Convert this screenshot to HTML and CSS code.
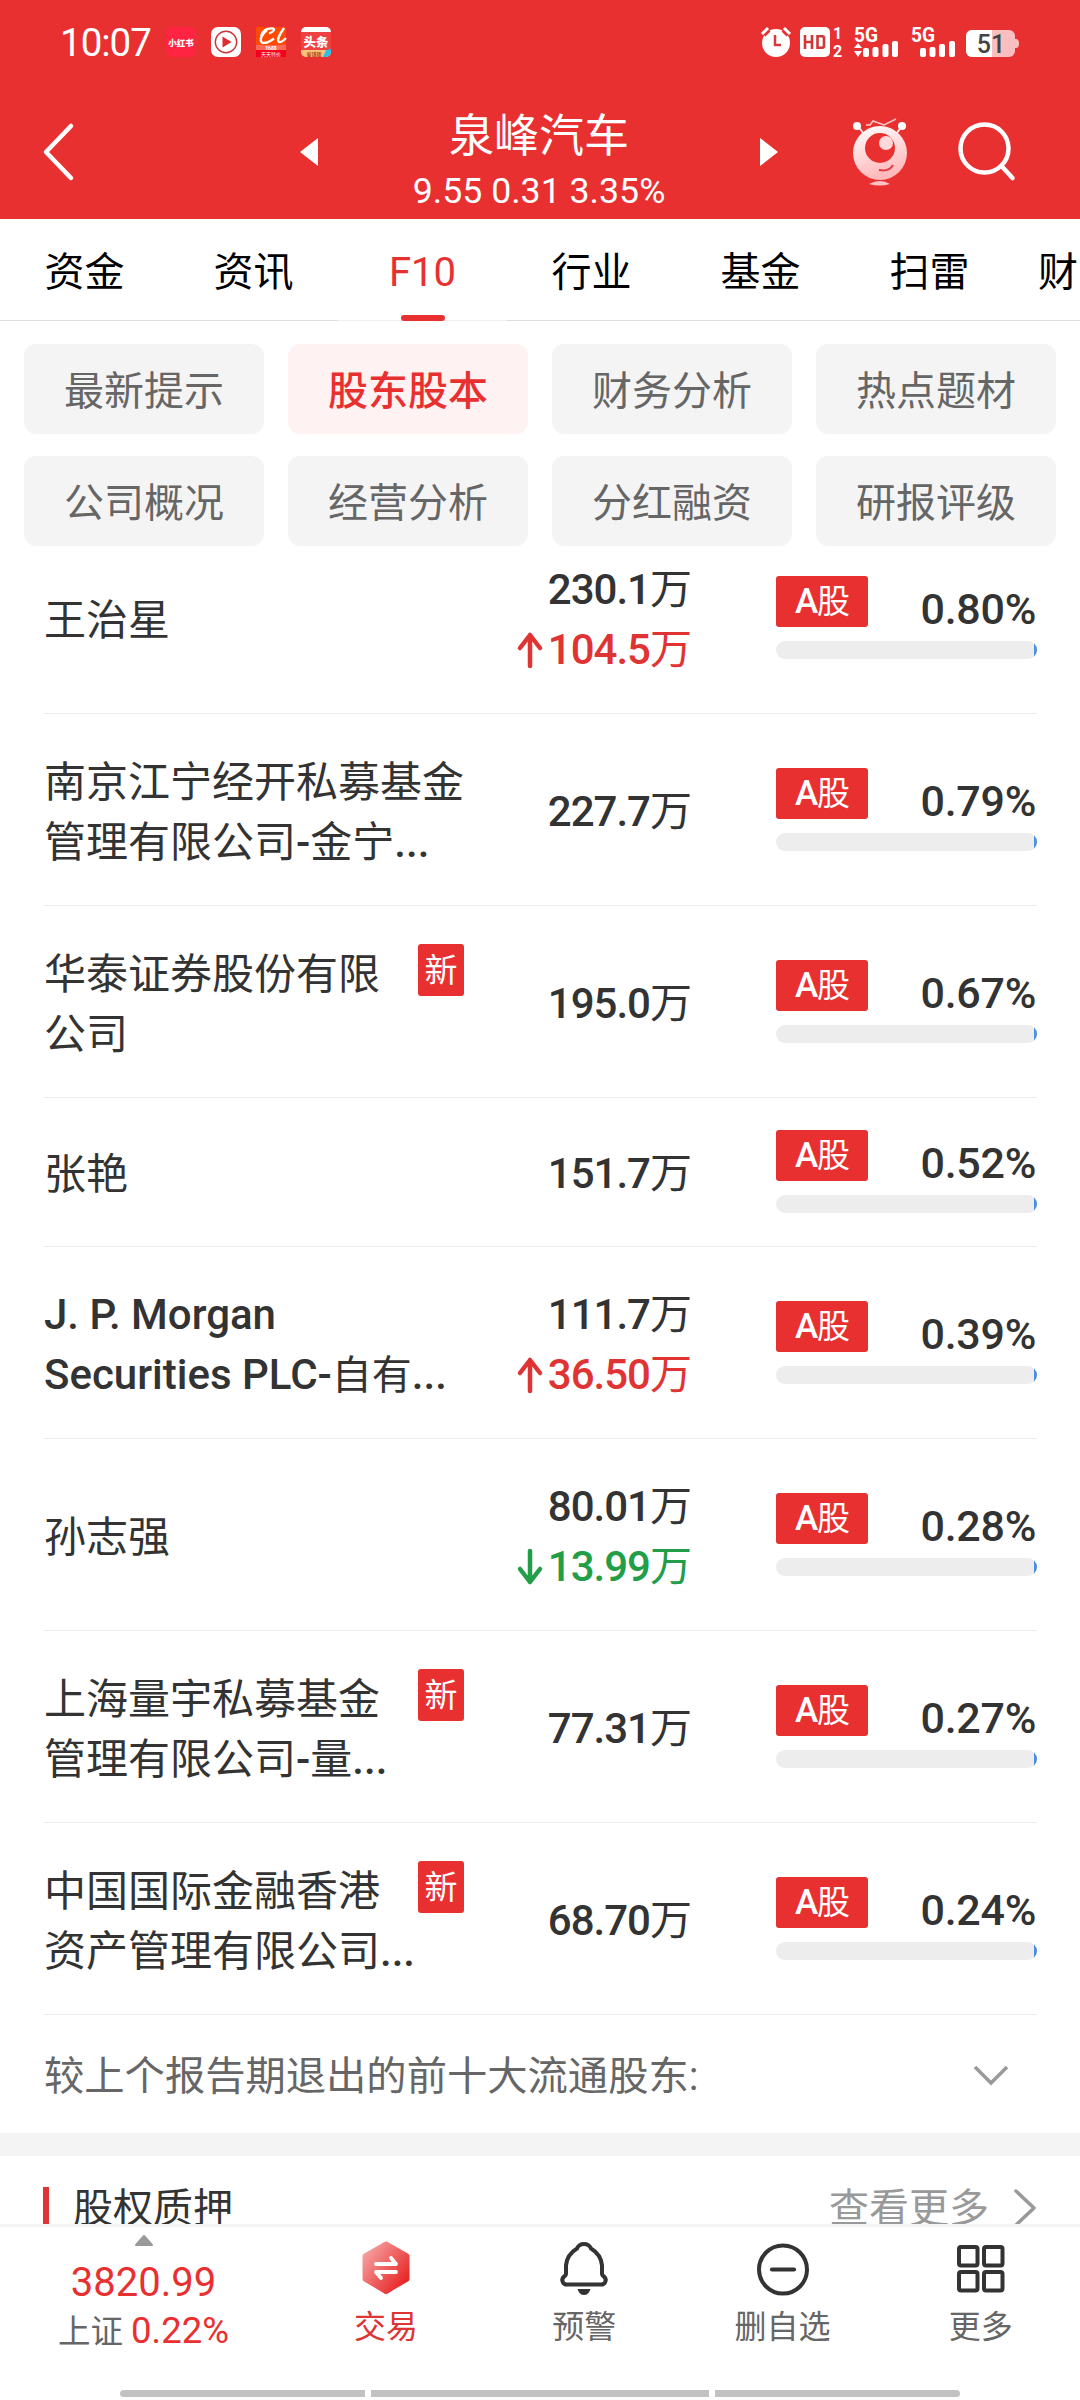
FILE: index.html
```
<!DOCTYPE html>
<html lang="zh-CN">
<head>
	<meta charset="UTF-8">
	<title>泉峰汽车</title>
	<link rel="stylesheet" href="styles.css">
</head>
<body>
<div class="page">
	<!--顶部-->
	<div class="top">
		<div class="status">
			<span class="time">10:07</span>
			<div class="apps">
				<svg width="30" height="30" viewBox="0 0 30 30"><rect width="30" height="30" rx="7" fill="#ff2442"/><text x="15" y="18.5" font-size="8.5" font-weight="900" fill="#fff" text-anchor="middle">小红书</text></svg>
				<svg width="30" height="30" viewBox="0 0 30 30"><rect width="30" height="30" rx="7" fill="#fff"/><circle cx="15" cy="15" r="10.7" fill="none" stroke="#c8373a" stroke-width="1.4"/><path d="M11.5 9.5v11l9-5.500z" fill="#e02b30"/></svg>
				<svg width="30" height="30" viewBox="0 0 30 30"><rect width="30" height="30" fill="#ff4a00"/><path d="M5 9C7 3 12 1 17 1.500c3 1-1 4-4 5M11 3C6 7 3 13 6 15.500c4 2 9-2 12-4M28 1c-4 6-8 12-5 14 2 1 5-2 7-4" fill="none" stroke="#fff" stroke-width="2.300"/><rect y="18" width="30" height="6" fill="#ff6a58"/><rect y="23" width="30" height="7" fill="#f5001d"/><text x="15" y="22.500" font-size="5" font-weight="700" fill="#fff" text-anchor="middle">1688</text><text x="15" y="28.500" font-size="5" fill="#fff" text-anchor="middle">天天特价</text></svg>
				<svg width="30" height="30" viewBox="0 0 30 30"><rect width="30" height="30" rx="5" fill="#f04142"/><path d="M0 5a5 5 0 0 1 5-5h20a5 5 0 0 1 5 5z" fill="#fff"/><text x="15" y="19.500" font-size="12.500" font-weight="900" fill="#fff" text-anchor="middle">头条</text><path d="M0 23h30v2a5 5 0 0 1-5 5H5a5 5 0 0 1-5-5z" fill="#f6c47c"/><text x="13" y="28.500" font-size="5" font-weight="700" fill="#b54a20" text-anchor="middle">省钱版</text><path d="M22 30l3-7 5-1v3a5 5 0 0 1-5 5z" fill="#2dbfe6"/></svg>
			</div>
			<svg class="signs" width="258" height="32" viewBox="0 0 258 32">
				<!--闹钟-->
				<circle cx="14" cy="17" r="14" fill="#fff"/>
				<path d="M1 8l5-5M27 8l-5-5" stroke="#e93030" stroke-width="7"/>
				<path d="M0 8l6-6M28 8l-6-6" stroke="#fff" stroke-width="3"/>
				<path d="M13 9v10h6" fill="none" stroke="#d9393a" stroke-width="2.500"/>
				<!--HD-->
				<rect x="38" y="1" width="30" height="30" rx="5" fill="#fff"/>
				<path d="M43 9v14M50 9v14M43 16h7M55.500 10.200h4.500q2 0 2 2v7.600q0 2-2 2h-4.500z" fill="none" stroke="#cf3638" stroke-width="2.600"/>
				<text x="75.500" y="13" font-size="16" font-weight="700" text-anchor="middle">1</text>
				<text x="75.500" y="31" font-size="16" font-weight="700" text-anchor="middle">2</text>
				<!--信号-->
				<text x="92" y="16" font-size="20" font-weight="700" textLength="24" lengthAdjust="spacingAndGlyphs">5G</text>
				<path d="M92 22l4-5 4 5zM92 25h8l-4 6z" fill="#fff"/>
				<g fill="#fff"><rect x="101" y="22" width="6" height="9" rx="2"/><rect x="110.500" y="21" width="6" height="10" rx="2"/><rect x="120.500" y="18" width="6" height="13" rx="2"/><rect x="130" y="15" width="6" height="16" rx="2"/></g>
				<text x="149" y="16" font-size="20" font-weight="700" textLength="24" lengthAdjust="spacingAndGlyphs">5G</text>
				<g fill="#fff"><rect x="158" y="22" width="6" height="9" rx="2"/><rect x="167.500" y="21" width="6" height="10" rx="2"/><rect x="177" y="18" width="6" height="13" rx="2"/><rect x="187" y="15" width="6" height="16" rx="2"/></g>
				<!--电量-->
				<path d="M210 4h37a6 6 0 0 1 6 6v3h1q3 0 3 4.500T254 22h-1v3a6 6 0 0 1-6 6h-37a6 6 0 0 1-6-6V10a6 6 0 0 1 6-6z" fill="#f9bfc0"/>
				<path d="M210 4h20v27h-20a6 6 0 0 1-6-6V10a6 6 0 0 1 6-6z" fill="#fff"/>
				<text class="power" x="229" y="26.500" font-size="25" font-weight="500" text-anchor="middle">51</text>
			</svg>
		</div>
		<div class="title-bar">
			<svg class="back" width="32" height="60" viewBox="0 0 32 60"><path d="M28 4L3 30l25 26" fill="none" stroke="#fff" stroke-width="4.500" stroke-linecap="round" stroke-linejoin="round"/></svg>
			<svg class="prev" width="18" height="28" viewBox="0 0 18 28"><path d="M18 0v28L0 14z" fill="#fff"/></svg>
			<div class="stock">
				<h1>泉峰汽车</h1>
				<p>9.55 0.31 3.35%</p>
			</div>
			<svg class="next" width="18" height="28" viewBox="0 0 18 28"><path d="M0 0v28l18-14z" fill="#fff"/></svg>
			<svg class="robot" width="56" height="70" viewBox="0 0 56 70">
				<defs><linearGradient id="rb" x1="0" y1="0" x2="0.300" y2="1"><stop offset="0" stop-color="#fff"/><stop offset="1" stop-color="#ffb9bb"/></linearGradient></defs>
				<path d="M5 8l7 9M51 8l-7 9" stroke="#ffe9e9" stroke-width="2"/>
				<circle cx="5" cy="9" r="4" fill="#fff"/><circle cx="50" cy="9" r="4" fill="#fff"/>
				<path d="M14 8h4l3-4 11 4 12-6" fill="none" stroke="#ffc9ca" stroke-width="1.500"/>
				<circle cx="28" cy="36" r="27" fill="url(#rb)"/>
				<circle cx="28" cy="31" r="15" fill="#e93030"/>
				<circle cx="34" cy="26" r="7" fill="#ffd9da"/>
				<path d="M27 53q10 2 14-5" fill="none" stroke="#e03a3c" stroke-width="2"/>
				<path d="M17 67q11-6 21 0-10 3-21 0z" fill="#ffc3c5"/>
			</svg>
			<svg class="search" width="58" height="60" viewBox="0 0 58 60"><circle cx="26.500" cy="26.500" r="24" fill="none" stroke="#fff" stroke-width="4.500"/><path d="M43.500 44l11 12" stroke="#fff" stroke-width="4.500" stroke-linecap="round"/></svg>
		</div>
	</div>

	<!--标签-->
	<ul class="tabs">
		<li>资金</li>
		<li>资讯</li>
		<li class="current">F10</li>
		<li>行业</li>
		<li>基金</li>
		<li>扫雷</li>
		<li class="last">财</li>
	</ul>

	<ul class="menu">
		<li>最新提示</li>
		<li class="current">股东股本</li>
		<li>财务分析</li>
		<li>热点题材</li>
		<li>公司概况</li>
		<li>经营分析</li>
		<li>分红融资</li>
		<li>研报评级</li>
	</ul>

	<!--股东列表-->
	<ul class="list">
		<li class="first">
			<div class="name"><p>王治星</p></div>
			<div class="num">
				<p>230.1<i>万</i></p>
				<p class="up"><svg width="24" height="36" viewBox="0 0 24 36"><path d="M12 34V3M2 16L12 3l10 13" /></svg>104.5<i>万</i></p>
			</div>
			<div class="rate">
				<div class="rate-top"><span class="tag"><em>A</em>股</span><b>0.80%</b></div>
				<div class="bar"><i></i></div>
			</div>
		</li>
		<li>
			<div class="name"><p>南京江宁经开私募基金<br>管理有限公司<em>-</em>金宁<em>...</em></p></div>
			<div class="num"><p>227.7<i>万</i></p></div>
			<div class="rate">
				<div class="rate-top"><span class="tag"><em>A</em>股</span><b>0.79%</b></div>
				<div class="bar"><i></i></div>
			</div>
		</li>
		<li>
			<div class="name"><p>华泰证券股份有限<br>公司</p><span class="new">新</span></div>
			<div class="num"><p>195.0<i>万</i></p></div>
			<div class="rate">
				<div class="rate-top"><span class="tag"><em>A</em>股</span><b>0.67%</b></div>
				<div class="bar"><i></i></div>
			</div>
		</li>
		<li class="short">
			<div class="name"><p>张艳</p></div>
			<div class="num"><p>151.7<i>万</i></p></div>
			<div class="rate">
				<div class="rate-top"><span class="tag"><em>A</em>股</span><b>0.52%</b></div>
				<div class="bar"><i></i></div>
			</div>
		</li>
		<li>
			<div class="name"><p><em>J. P. Morgan<br>Securities PLC-</em><span class="tight">自有</span><em>...</em></p></div>
			<div class="num">
				<p>111.7<i>万</i></p>
				<p class="up"><svg width="24" height="36" viewBox="0 0 24 36"><path d="M12 34V3M2 16L12 3l10 13" /></svg>36.50<i>万</i></p>
			</div>
			<div class="rate">
				<div class="rate-top"><span class="tag"><em>A</em>股</span><b>0.39%</b></div>
				<div class="bar"><i></i></div>
			</div>
		</li>
		<li>
			<div class="name"><p>孙志强</p></div>
			<div class="num">
				<p>80.01<i>万</i></p>
				<p class="down"><svg width="24" height="36" viewBox="0 0 24 36"><path d="M12 2v31M2 20l10 13 10-13" /></svg>13.99<i>万</i></p>
			</div>
			<div class="rate">
				<div class="rate-top"><span class="tag"><em>A</em>股</span><b>0.28%</b></div>
				<div class="bar"><i></i></div>
			</div>
		</li>
		<li>
			<div class="name"><p>上海量宇私募基金<br>管理有限公司<em>-</em>量<em>...</em></p><span class="new">新</span></div>
			<div class="num"><p>77.31<i>万</i></p></div>
			<div class="rate">
				<div class="rate-top"><span class="tag"><em>A</em>股</span><b>0.27%</b></div>
				<div class="bar"><i></i></div>
			</div>
		</li>
		<li>
			<div class="name"><p>中国国际金融香港<br>资产管理有限公司<em>...</em></p><span class="new">新</span></div>
			<div class="num"><p>68.70<i>万</i></p></div>
			<div class="rate">
				<div class="rate-top"><span class="tag"><em>A</em>股</span><b>0.24%</b></div>
				<div class="bar"><i></i></div>
			</div>
		</li>
	</ul>
	<div class="exit">
		<span>较上个报告期退出的前十大流通股东:</span>
		<svg width="36" height="24" viewBox="0 0 36 24"><path d="M2 3l16 16L34 3" fill="none" stroke="#999" stroke-width="3.500"/></svg>
	</div>

	<!--股权质押-->
	<div class="pledge">
		<h2>股权质押</h2>
		<span class="more">查看更多</span>
		<svg width="24" height="40" viewBox="0 0 24 40"><path d="M3 3l18 17L3 37" fill="none" stroke="#999" stroke-width="3.500" stroke-linecap="round" stroke-linejoin="round"/></svg>
	</div>

	<!--底部导航-->
	<div class="foot">
		<div class="index">
			<svg width="20" height="12" viewBox="0 0 20 12"><path d="M10 1l8 9H2z" fill="#999" stroke="#999" stroke-width="2" stroke-linejoin="round"/></svg>
			<strong>3820.99</strong>
			<p>上证 <em>0.22%</em></p>
		</div>
		<div class="item on">
			<svg width="56" height="56" viewBox="0 0 56 56">
				<defs><linearGradient id="hex" x1="0" y1="0.100" x2="0.900" y2="0.900"><stop offset="0" stop-color="#f6a5a5"/><stop offset="1" stop-color="#e82424"/></linearGradient></defs>
				<path d="M28 4L49 16v23L28 51.500 7 39V16z" fill="url(#hex)" stroke="url(#hex)" stroke-width="5" stroke-linejoin="round"/>
				<path d="M18 24h20l-5-6M38 32H18l5 6" fill="none" stroke="#fff" stroke-width="3.800" stroke-linecap="round" stroke-linejoin="round"/>
			</svg>
			<p>交易</p>
		</div>
		<div class="item">
			<svg width="56" height="56" viewBox="0 0 56 56"><path d="M21 8.500q2-4.500 7-4.500t7 4.500q10 6 11 17v8q0 2 2 3 3 3 1 6-1 2-4 2H11q-3 0-4-2-2-3 1-6 2-1 2-3v-8q1-11 11-17z" fill="none" stroke="#333" stroke-width="4"/><path d="M21.500 49h13q-2 6-6.500 6t-6.500-6z" fill="#333"/></svg>
			<p>预警</p>
		</div>
		<div class="item">
			<svg width="56" height="56" viewBox="0 0 56 56"><circle cx="28" cy="29.500" r="24" fill="none" stroke="#333" stroke-width="4"/><path d="M17 29.500h22" stroke="#333" stroke-width="4.200" stroke-linecap="round"/></svg>
			<p>删自选</p>
		</div>
		<div class="item">
			<svg width="56" height="56" viewBox="0 0 56 56"><g fill="none" stroke="#333" stroke-width="4"><rect x="6" y="7" width="18.500" height="18.500" rx="2"/><rect x="31" y="7" width="18.500" height="18.500" rx="2"/><rect x="6" y="32" width="18.500" height="18.500" rx="2"/><rect x="31" y="32" width="18.500" height="18.500" rx="2"/></g></svg>
			<p>更多</p>
		</div>
	</div>
	<div class="home"><i></i><i></i><i></i></div>
</div>
</body>
</html>
```
FILE: styles.css
```
* {
    padding: 0;
    margin: 0;
    list-style: none;
    box-sizing: border-box;
}

body {
    width: 1080px;
    background: #fff;
    color: #333;
    font-family: Roboto, "Noto Sans CJK SC", sans-serif;
}

svg {
    display: block;
    flex: none;
    overflow: visible;
}

em, i {
    font-style: normal;
}

.page {
    height: 2400px;
    overflow: hidden;
    display: flex;
    flex-direction: column;
}

.page > * {
    flex: none;
}

/* 顶部 */
.top {
    height: 219px;
    background: #e93030;
    color: #fff;
}

.status {
    height: 84px;
    padding: 0 60px;
    display: flex;
    align-items: center;
}

.time {
    width: 106px;
    padding-top: 1px;
    font-size: 38.5px;
    letter-spacing: -1px;
}

.apps {
    display: flex;
    gap: 15px;
}

.signs {
    margin-left: auto;
    fill: #fff;
}

.signs .power {
    fill: #444;
}

.title-bar {
    height: 135px;
    padding-left: 43px;
    display: flex;
    align-items: center;
}

.prev {
    margin-left: 225px;
}

.stock {
    width: 442px;
    padding-top: 14px;
    text-align: center;
}

.stock h1 {
    height: 66px;
    line-height: 66px;
    font-size: 45px;
    font-weight: 400;
}

.stock p {
    height: 44px;
    line-height: 42px;
    font-size: 35.7px;
}

.robot {
    margin-left: 74px;
}

.search {
    margin-left: 50px;
}

/* 标签 */
.tabs {
    height: 102px;
    display: flex;
    overflow: hidden;
}

.tabs li {
    flex: none;
    width: 169px;
    height: 102px;
    line-height: 108px;
    border-bottom: 1px solid #ddd;
    text-align: center;
    font-size: 40px;
    color: #000;
}

.tabs .current {
    color: #e93030;
    border-bottom-color: #f0f0f0;
    display: flex;
    flex-direction: column;
    align-items: center;
}

.tabs .current::after {
    content: "";
    flex: none;
    width: 44px;
    height: 6px;
    margin-top: -12px;
    border-radius: 3px;
    background: #e93030;
}

.tabs .last {
    padding-left: 24px;
    text-align: left;
}

.menu {
    padding: 23px 24px 0;
    display: grid;
    grid-template-columns: repeat(4, 240px);
    gap: 22px 24px;
}

.menu li {
    height: 90px;
    line-height: 96px;
    border-radius: 12px;
    background: #f4f4f4;
    color: #666;
    text-align: center;
    font-size: 40px;
}

.menu .current {
    background: #fff2f2;
    color: #e93030;
    font-weight: 500;
}

/* 股东列表 */
.list {
    padding: 0 43px 0 44px;
}

.list li {
    height: 192px;
    border-bottom: 1px solid #ececec;
    display: flex;
    align-items: center;
}

.list .first {
    height: 168px;
    align-items: flex-end;
}

.list .first > div {
    margin-bottom: 35px;
}

.list .first .name {
    height: 120px;
    align-items: center;
}

.list .first .rate {
    margin-bottom: 54px;
}

.list .short {
    height: 149px;
}

.short .rate {
    padding-bottom: 2px;
}

.name {
    width: 420px;
    display: flex;
    justify-content: space-between;
    line-height: 60px;
    font-size: 42px;
}

.name p {
    padding-top: 3px;
    margin-bottom: -3px;
}

.name em {
    font-weight: 500;
}

.name .tight {
    font-size: 40px;
}

.new {
    width: 46px;
    height: 52px;
    margin-top: 2px;
    line-height: 54px;
    border-radius: 3px;
    background: #e93030;
    color: #fff;
    text-align: center;
    font-size: 33px;
}

.num {
    width: 227px;
    padding-top: 2px;
    margin-bottom: -2px;
    line-height: 60px;
    font-size: 42px;
    font-weight: 500;
    letter-spacing: -1px;
}

.list .first .num {
    margin-bottom: 33px;
}

.num p {
    display: flex;
    justify-content: flex-end;
    align-items: center;
}

.num i {
    font-weight: 400;
}

.num svg {
    margin-right: 6px;
    fill: none;
    stroke: currentColor;
    stroke-width: 4.5;
    stroke-linecap: round;
    stroke-linejoin: round;
}

.up {
    color: #e03434;
}

.down {
    color: #229d48;
}

.rate {
    width: 261px;
    margin-left: auto;
}

.rate-top {
    display: flex;
    justify-content: space-between;
    align-items: flex-end;
}

.tag {
    width: 92px;
    height: 51px;
    line-height: 52px;
    border-radius: 3px;
    background: #e93030;
    color: #fff;
    text-align: center;
    font-size: 33px;
    letter-spacing: -1px;
}

.tag em {
    font-size: 35px;
    font-weight: 500;
}

.rate b {
    padding-right: 1px;
    line-height: 36px;
    font-size: 43px;
    font-weight: 500;
    letter-spacing: -0.3px;
}

.bar {
    height: 18px;
    margin-top: 14px;
    border-radius: 9px;
    background: #ededed;
    overflow: hidden;
    display: flex;
    justify-content: flex-end;
}

.bar i {
    width: 3px;
    background: #4a90e2;
}

.exit {
    height: 118px;
    padding: 0 71px 0 44px;
    display: flex;
    justify-content: space-between;
    align-items: center;
    font-size: 40.3px;
    color: #666;
}

.exit span {
    padding-bottom: 4px;
}

.exit svg {
    margin-top: 4px;
}

/* 股权质押 */
.pledge {
    height: 91px;
    padding: 31px 43px 0;
    border-top: 23px solid #f4f4f4;
    overflow: hidden;
    display: flex;
    line-height: 43px;
    font-size: 40px;
}

.pledge h2 {
    height: 42px;
    padding-left: 24px;
    border-left: 6px solid #e03434;
    font-size: 40px;
    font-weight: 400;
}

.pledge .more {
    margin-left: auto;
    margin-right: 24px;
    color: #999;
}

.pledge svg {
    margin-top: 1px;
}

/* 底部导航 */
.foot {
    height: 166px;
    border-top: 3px solid #f4f4f4;
    background: #fff;
    display: flex;
    color: #666;
}

.index {
    width: 287px;
    padding-top: 8px;
    display: flex;
    flex-direction: column;
    align-items: center;
}

.index strong {
    margin-top: 12px;
    line-height: 48px;
    font-size: 40px;
    font-weight: 400;
    color: #e93030;
}

.index p {
    line-height: 48px;
    font-size: 32.5px;
}

.index em {
    font-size: 36.5px;
    color: #e93030;
}

.item {
    width: 198.25px;
    padding-top: 13px;
    display: flex;
    flex-direction: column;
    align-items: center;
    line-height: 44px;
    font-size: 32px;
}

.item p {
    margin-top: 9px;
}

.item.on {
    color: #dd3434;
}

.home {
    display: flex;
    gap: 6px;
    padding: 0 120px;
}

.home i {
    flex: 245 0 0;
    height: 7px;
    background: #c2c2c2;
}

.home i:nth-child(2) {
    flex-grow: 338;
}

.home i:first-child {
    border-radius: 4px 0 0 4px;
}

.home i:last-child {
    border-radius: 0 4px 4px 0;
}
```
